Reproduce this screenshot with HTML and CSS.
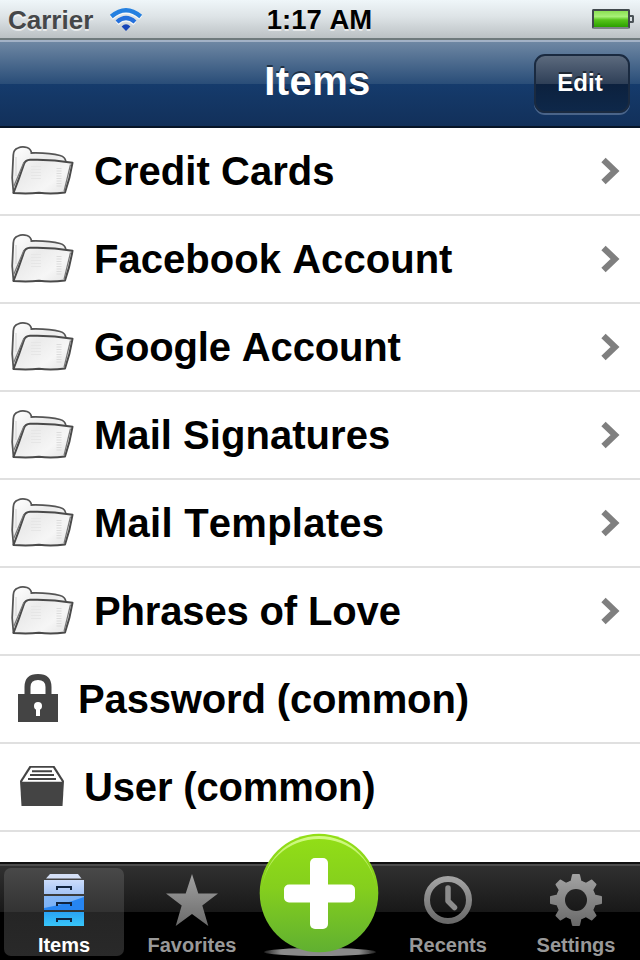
FILE: index.html
```html
<!DOCTYPE html>
<html>

<head>
  <meta charset="UTF-8">
  <title>Items</title>
  <link rel="stylesheet" href="styles.css">
</head>

<body>
  <!-- shared icons -->
  <svg class="defs" width="0" height="0">
    <defs>
      <linearGradient id="paper" x1="0" y1="0" x2="1" y2="1">
        <stop offset="0" stop-color="#fff"/>
        <stop offset="0.400" stop-color="#ebebeb"/>
        <stop offset="0.700" stop-color="#f6f6f6"/>
        <stop offset="1" stop-color="#e2e2e2"/>
      </linearGradient>
      <linearGradient id="grey" x1="0" y1="0" x2="0" y2="1">
        <stop offset="0" stop-color="#a2a2a2"/>
        <stop offset="1" stop-color="#6a6a6a"/>
      </linearGradient>
      <symbol id="folder" viewBox="0 0 66 54">
        <path d="M5 49 L4 11 Q4 5 9 4 Q13 2 18 3.500 Q22 5 23 9 Q38 9 51 11.500 Q56 13 57 18 L63 19 L56 49 Q30 51 5 49Z" fill="url(#paper)"/>
        <path d="M4.500 49 L3.200 34 L4.300 11 Q4.500 5.500 9 4 Q13 2 18 3.500 Q22 5 22.500 9 M21.500 9 Q40 8.500 51 11.500 Q56.500 13 57 18" fill="none" stroke="#555" stroke-width="1.800"/>
        <path d="M4.500 49 Q10 35 15 20 Q16.500 16 21 15.800 Q42 15 63.500 18.800 Q61 34 56 48.500 Q42 50.500 30 48.800 Q18 50 4.500 49Z" fill="none" stroke="#4a4a4a" stroke-width="2" stroke-linejoin="round"/>
        <path d="M4.500 43 L15 18 M55 47.500 L61.500 20.500" fill="none" stroke="#777" stroke-width="1.200"/>
        <path d="M7 13 V32" fill="none" stroke="#ddd" stroke-width="1.500"/>
        <path d="M50 24 V43" fill="none" stroke="#dcdcdc" stroke-width="5" stroke-dasharray="1 1.500"/>
        <path d="M27 22 V36" fill="none" stroke="#e6e6e6" stroke-width="10" stroke-dasharray="1 2"/>
      </symbol>
      <symbol id="chevron" viewBox="0 0 20 28">
        <path d="M2.500 3 L14 14 L2.500 25" fill="none" stroke="#7f7f7f" stroke-width="6.200"/>
      </symbol>
    </defs>
  </svg>

  <div class="status-bar">
    <div class="carrier">Carrier
      <svg class="wifi" width="34" height="26" viewBox="0 0 34 26">
        <g fill="none" stroke="#fff" stroke-opacity="0.700" transform="translate(0 1.500)">
          <path d="M2.300 9.500 Q17 -3 31.700 9.500" stroke-width="4.500"/>
          <path d="M8 15 Q17 7 26 15" stroke-width="4.500"/>
        </g>
        <path d="M2.300 9.500 Q17 -3 31.700 9.500" fill="none" stroke="#2480e0" stroke-width="4.300"/>
        <path d="M8 15 Q17 7 26 15" fill="none" stroke="#2470dc" stroke-width="4.300"/>
        <path d="M12.600 19.500 Q17 15 21.400 19.500 L17 24Z" fill="#1745b8"/>
      </svg>
    </div>
    <div class="clock">1:17 AM</div>
    <div class="battery">
      <div class="cell"></div>
      <div class="cap"></div>
    </div>
  </div>

  <div class="nav-bar">
    <h1>Items</h1>
    <div class="edit">Edit</div>
  </div>

  <ul class="list">
    <li><svg class="folder"><use href="#folder"/></svg><span>Credit Cards</span><svg class="chevron"><use href="#chevron"/></svg></li>
    <li><svg class="folder"><use href="#folder"/></svg><span>Facebook Account</span><svg class="chevron"><use href="#chevron"/></svg></li>
    <li><svg class="folder"><use href="#folder"/></svg><span class="tight">Google Account</span><svg class="chevron"><use href="#chevron"/></svg></li>
    <li><svg class="folder"><use href="#folder"/></svg><span>Mail Signatures</span><svg class="chevron"><use href="#chevron"/></svg></li>
    <li><svg class="folder"><use href="#folder"/></svg><span class="loose">Mail Templates</span><svg class="chevron"><use href="#chevron"/></svg></li>
    <li><svg class="folder"><use href="#folder"/></svg><span class="tight">Phrases of Love</span><svg class="chevron"><use href="#chevron"/></svg></li>
    <li>
      <svg class="lock" viewBox="0 0 40 48">
        <path d="M9.500 22 V13 Q9.500 3 20 3 Q30.500 3 30.500 13 V22" fill="none" stroke="#444" stroke-width="6"/>
        <path d="M0 20 H40 V48 H0Z" fill="#444"/>
        <circle cx="20" cy="32" r="4" fill="#fff"/>
        <path d="M18 32 H22 V42 H18Z" fill="#fff"/>
      </svg>
      <span class="tight">Password (common)</span>
    </li>
    <li>
      <svg class="drawer" viewBox="0 0 44 40">
        <path d="M9.500 0 H34.500 L44 15 L42.500 40 H1.500 L0 15Z" fill="#444"/>
        <path d="M11 1.700 H33 L42 15.700 H2Z" fill="#fff"/>
        <path d="M12 5.200 H32 M10 9 H34 M8 13 H36" stroke="#444" stroke-width="1.900"/>
      </svg>
      <span class="tight">User (common)</span>
    </li>
  </ul>

  <div class="tab-bar">
    <div class="tab active">
      <svg width="42" height="54" viewBox="0 0 42 54">
        <defs>
          <linearGradient id="d1" x1="0" y1="0" x2="0" y2="1"><stop offset="0" stop-color="#cbdcfb"/><stop offset="1" stop-color="#a5c4f5"/></linearGradient>
          <linearGradient id="d2" x1="0" y1="0" x2="1" y2="1"><stop offset="0" stop-color="#88b8f7"/><stop offset="1" stop-color="#6cabf5"/></linearGradient>
          <linearGradient id="d3" x1="0" y1="0" x2="0" y2="1"><stop offset="0" stop-color="#2aa2f4"/><stop offset="1" stop-color="#38c6f9"/></linearGradient>
        </defs>
        <path d="M7 1 H35 L38.500 5.500 H3Z" fill="#d5e0f7"/>
        <path d="M1 7 H41 V21 H1Z" fill="url(#d1)"/>
        <path d="M1 23 H41 V37 H1Z" fill="url(#d2)"/>
        <path d="M1 35 Q19 32 41 24 V37 H1Z" fill="#2685f2"/>
        <path d="M1 39 H41 V53 H1Z" fill="url(#d3)"/>
        <path d="M14 17 V14 H28 V17 M14 33 V30 H28 V33 M14 49 V46 H28 V49" fill="none" stroke="#10243f" stroke-width="2"/>
      </svg>
      <span>Items</span>
    </div>
    <div class="tab">
      <svg width="54" height="54" viewBox="0 0 54 54">
        <path d="M27 1 L33.300 20.500 H53 L37.300 32.500 L43.300 53 L27 41 L10.700 53 L16.700 32.500 L1 20.500 H20.700Z" fill="url(#grey)"/>
      </svg>
      <span>Favorites</span>
    </div>
    <div class="tab add">
      <svg width="124" height="126" viewBox="0 0 124 126">
        <defs>
          <linearGradient id="green" x1="0" y1="0" x2="0" y2="1"><stop offset="0" stop-color="#93df16"/><stop offset="0.450" stop-color="#85cf1d"/><stop offset="1" stop-color="#60b031"/></linearGradient>
          <linearGradient id="shine" x1="0" y1="0" x2="0" y2="1"><stop offset="0" stop-color="#d2fa86"/><stop offset="1" stop-color="#d2fa86" stop-opacity="0.300"/></linearGradient>
          <linearGradient id="floor" x1="0" y1="0" x2="1" y2="0"><stop offset="0" stop-color="#999" stop-opacity="0.200"/><stop offset="0.150" stop-color="#8a8a8a"/><stop offset="0.850" stop-color="#8a8a8a"/><stop offset="1" stop-color="#999" stop-opacity="0.200"/></linearGradient>
        </defs>
        <ellipse cx="62" cy="119" rx="56" ry="4" fill="url(#floor)"/>
        <circle cx="61" cy="60" r="59.300" fill="url(#green)"/>
        <path d="M4 60 A57 57 0 0 1 118 60 A57 54 0 0 0 4 60Z" fill="url(#shine)"/>
        <rect x="52" y="25" width="18" height="71" rx="5" fill="#fff"/>
        <rect x="26" y="51.500" width="71" height="18" rx="5" fill="#fff"/>
      </svg>
    </div>
    <div class="tab">
      <svg width="54" height="54" viewBox="0 0 54 54">
        <circle cx="27" cy="27" r="21" fill="none" stroke="url(#grey)" stroke-width="6"/>
        <path d="M27 15 V28 L33.500 34.500" fill="none" stroke="#8c8c8c" stroke-width="5.500" stroke-linecap="round" stroke-linejoin="round"/>
      </svg>
      <span>Recents</span>
    </div>
    <div class="tab">
      <svg width="54" height="54" viewBox="0 0 54 54">
        <mask id="hole">
          <rect width="54" height="54" fill="#fff"/>
          <circle cx="27" cy="27" r="11" fill="#000"/>
        </mask>
        <g mask="url(#hole)">
          <circle cx="27" cy="27" r="19.500" fill="url(#grey)"/>
          <path fill="url(#grey)" stroke="url(#grey)" stroke-width="2" stroke-linejoin="round" d="M24 2 H30 L31.500 8.500 L37 10.800 L42.500 7.500 L46.500 11.500 L43.200 17 L45.500 22.500 L52 24 V30 L45.500 31.500 L43.200 37 L46.500 42.500 L42.500 46.500 L37 43.200 L31.500 45.500 L30 52 H24 L22.500 45.500 L17 43.200 L11.500 46.500 L7.500 42.500 L10.800 37 L8.500 31.500 L2 30 V24 L8.500 22.500 L10.800 17 L7.500 11.500 L11.500 7.500 L17 10.800 L22.500 8.500Z"/>
        </g>
      </svg>
      <span>Settings</span>
    </div>
  </div>
</body>

</html>
```
FILE: styles.css
```css
* {
  box-sizing: border-box;
}

body {
  display: flex;
  flex-direction: column;
  width: 640px;
  height: 960px;
  margin: 0;
  overflow: hidden;
  background: #fff;
  font-family: "Liberation Sans", Arial, sans-serif;
  font-weight: bold;
  font-kerning: none;
}

.defs {
  position: absolute;
}

.status-bar {
  display: grid;
  grid-template-columns: 1fr auto 1fr;
  align-items: center;
  height: 40px;
  padding: 0 6px 0 8px;
  border-bottom: 2px solid #6f7a7c;
  background: linear-gradient(#eff6f9, #dde3e6 45%, #bbc1c4);
  text-shadow: 0 2px 0 rgba(255, 255, 255, 0.6);
}

.carrier {
  display: flex;
  align-items: center;
  gap: 16px;
  padding-top: 2px;
  color: #454749;
  font-size: 26px;
}

.clock {
  padding: 1px 3px 0 0;
  color: #000;
  font-size: 27.5px;
}

.battery {
  display: flex;
  justify-content: flex-end;
  align-items: center;
}

.cell {
  width: 38px;
  height: 20px;
  border: 2px solid #40484c;
  border-bottom-color: #7c8487;
  border-radius: 2px;
  background: linear-gradient(#8be053, #a8f078 35%, #58c51c 55%, #2ba000);
}

.cap {
  width: 4px;
  height: 8px;
  border: 2px solid #4b5357;
  border-left: 0;
  border-radius: 0 2px 2px 0;
}

.nav-bar {
  display: grid;
  grid-template-columns: 1fr auto 1fr;
  align-items: center;
  height: 88px;
  padding: 0 10px;
  border-top: 2px solid #a3b2c6;
  border-bottom: 2px solid #071426;
  background: linear-gradient(#6e87a3, #294d78 42px, #153b6c 42px, #12305a);
}

.nav-bar h1 {
  grid-column: 2;
  margin: 0;
  padding: 0 5px 7px 0;
  color: #fff;
  font-size: 40px;
  line-height: 46px;
  letter-spacing: 0.4px;
  text-shadow: 0 -2px 0 rgba(0, 0, 0, 0.5);
}

.edit {
  justify-self: end;
  width: 96px;
  height: 59px;
  margin-bottom: 2px;
  padding-right: 4px;
  border: 2px solid #1a2a40;
  border-radius: 11px;
  background: linear-gradient(#5f6d80, #2e3f57 30px, #0c213e 30px, #0e284a) border-box;
  box-shadow: 0 2px 0 rgba(130, 150, 180, 0.5);
  color: #fff;
  font-size: 24px;
  line-height: 54px;
  text-align: center;
  text-shadow: 0 -2px 0 rgba(0, 0, 0, 0.5);
}

.list {
  flex: 1;
  margin: 0;
  padding: 0;
  list-style: none;
}

.list li {
  display: flex;
  align-items: center;
  height: 88px;
  padding: 0 19px 0 9px;
  border-bottom: 2px solid #e0e0e0;
  color: #000;
  font-size: 40px;
}

.list span {
  flex: 1;
  letter-spacing: 0.04px;
}

.list .tight {
  letter-spacing: -0.15px;
}

.list .loose {
  letter-spacing: 0.25px;
}

.folder {
  width: 66px;
  height: 54px;
  margin-right: 19px;
}

.chevron {
  width: 20px;
  height: 28px;
}

.lock {
  width: 40px;
  height: 48px;
  margin: 0 20px 2px 9px;
}

.drawer {
  width: 44px;
  height: 40px;
  margin: 0 20px 2px 11px;
}

.tab-bar {
  display: flex;
  flex-shrink: 0;
  height: 98px;
  padding-top: 2px;
  border-top: 2px solid #111;
  background: linear-gradient(#4c4c4c 2px, #303030 2px, #181818 48px, #000 48px);
}

.tab {
  display: flex;
  flex-direction: column;
  align-items: center;
  width: 128px;
  height: 92px;
  padding-top: 7px;
  color: #999;
  font-size: 20px;
  line-height: 24px;
}

.tab svg {
  flex-shrink: 0;
}

.tab span {
  margin-top: 6px;
}

.active {
  width: 120px;
  height: 88px;
  margin: 2px 4px 0;
  padding-top: 5px;
  border-radius: 7px;
  background: linear-gradient(#494949, #333 44px, #252525 44px, #292929);
  color: #fff;
}

.add {
  position: relative;
}

/* the round button rises above the bar */
.add svg {
  position: absolute;
  top: -33px;
  left: 2px;
}
```
